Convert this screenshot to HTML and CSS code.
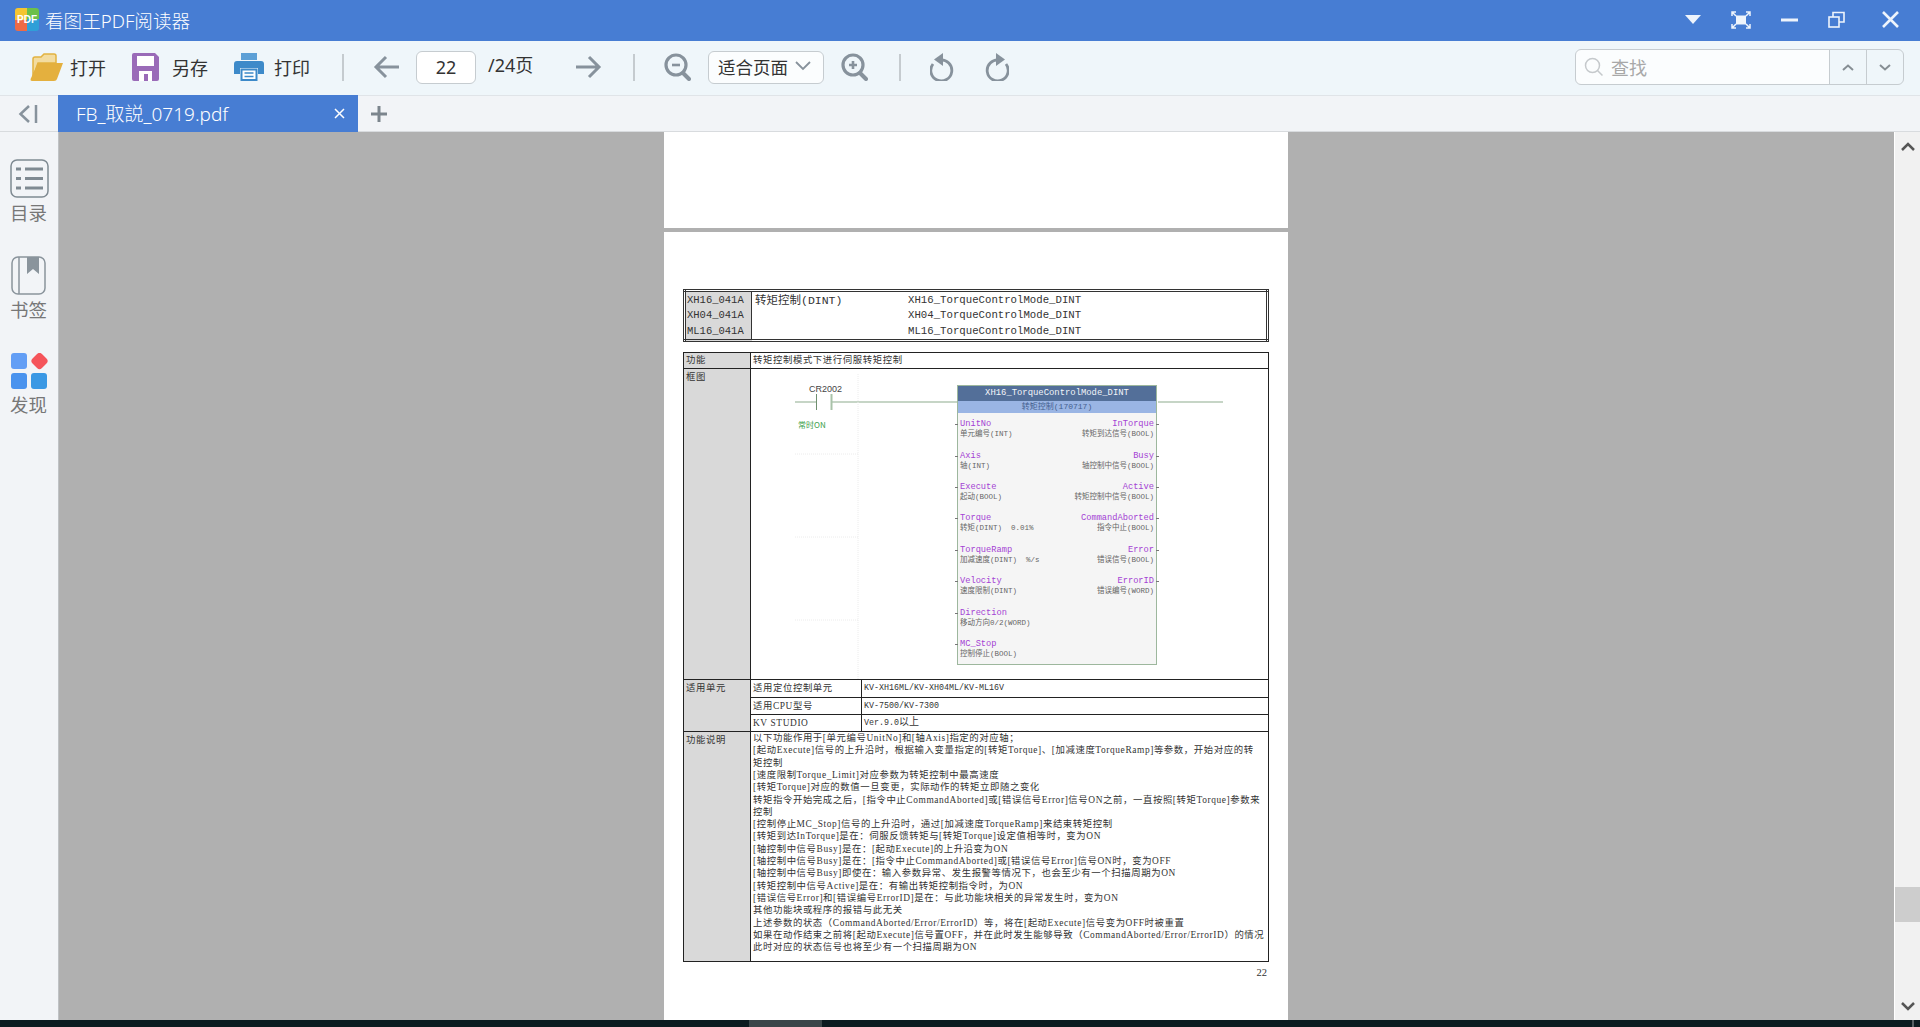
FILE: index.html
```html
<!DOCTYPE html>
<html lang="zh-CN">
<head>
  <meta charset="UTF-8">
  <title>看图王PDF阅读器</title>
  <link rel="stylesheet" href="styles.css">
</head>
<body>
  <header class="titlebar">
    <div class="app-logo">PDF</div>
    <div class="app-name">看图王PDF阅读器</div>
    <div class="win-btns">
      <svg width="16" height="10" viewBox="0 0 16 10"><path d="M0 0H16L8 9Z" fill="#eef4fc"/></svg>
      <svg width="20" height="18" viewBox="0 0 20 18" fill="none" stroke="#eef4fc" stroke-width="1.5"><rect x="5" y="4.5" width="10" height="9" fill="#eef4fc" stroke="none"/><path d="M1 5V1H5M15 1H19V5M19 13V17H15M5 17H1V13M1 1L5 5M19 1L15 5M19 17L15 13M1 17L5 13"/></svg>
      <svg width="17" height="4" viewBox="0 0 17 4"><rect y="0.5" width="17" height="3" fill="#eef4fc"/></svg>
      <svg width="17" height="17" viewBox="0 0 17 17" fill="none" stroke="#eef4fc" stroke-width="1.6"><rect x="1" y="6" width="10" height="10"/><path d="M5 6V1.5H16V11H11"/></svg>
      <svg class="win-close" width="17" height="17" viewBox="0 0 17 17" fill="none" stroke="#eef4fc" stroke-width="2.6"><path d="M1 1L16 16M16 1L1 16"/></svg>
    </div>
  </header>

  <div class="toolbar">
    <div class="tool">
      <svg width="33" height="28" viewBox="0 0 33 28"><path d="M3 24V6Q3 4 5 4H11L14 1H24Q26 1 26 3V10H8Z" fill="#f3dca0" stroke="#e2b240" stroke-width="1.5"/><path d="M8 10H33L27 26Q26.500 28 24 28H2Q0 28 0.600 26Z" fill="#e4b03e"/></svg>
      <span>打开</span>
    </div>
    <div class="tool">
      <svg width="27" height="28" viewBox="0 0 27 28"><path d="M2 0H23L27 4V26Q27 28 25 28H2Q0 28 0 26V2Q0 0 2 0Z" fill="#9a6bb8"/><rect x="5" y="3" width="17" height="10" fill="#fff"/><path d="M7 28V18H20V28H16V21H12V28Z" fill="#fff"/></svg>
      <span>另存</span>
    </div>
    <div class="tool">
      <svg width="30" height="28" viewBox="0 0 30 28"><path d="M7 0H23V7H7Z" fill="#5da0d6"/><path d="M3 8H27Q30 8 30 11V21H24V15H6V21H0V11Q0 8 3 8Z" fill="#3d8ac9"/><rect x="7.500" y="16.500" width="15" height="10.500" fill="#fff" stroke="#3d8ac9" stroke-width="2"/><path d="M10.500 20H19.500M10.500 23.500H19.500" stroke="#3d8ac9" stroke-width="1.500"/></svg>
      <span>打印</span>
    </div>
    <div class="sep"></div>
    <svg class="icon-nav" width="26" height="24" viewBox="0 0 26 24" fill="none" stroke="#87929c" stroke-width="3"><path d="M26 12H3M13 2L3 12L13 22"/></svg>
    <div class="page-input">22</div>
    <div class="page-total">/24页</div>
    <svg class="icon-next" width="26" height="24" viewBox="0 0 26 24" fill="none" stroke="#87929c" stroke-width="3"><path d="M0 12H23M13 2L23 12L13 22"/></svg>
    <div class="sep"></div>
    <svg width="27" height="28" viewBox="0 0 27 28" fill="none" stroke="#87929c"><circle cx="12" cy="12" r="10" stroke-width="3.200"/><path d="M8 12H16" stroke-width="2.600"/><path d="M19 20L25 26" stroke-width="4" stroke-linecap="round"/></svg>
    <div class="zoom-select">适合页面<svg width="16" height="10" viewBox="0 0 16 10" fill="none" stroke="#87929c" stroke-width="1.800"><path d="M1 1L8 8L15 1"/></svg></div>
    <svg width="27" height="28" viewBox="0 0 27 28" fill="none" stroke="#87929c"><circle cx="12" cy="12" r="10" stroke-width="3.200"/><path d="M8 12H16M12 8V16" stroke-width="2.600"/><path d="M19 20L25 26" stroke-width="4" stroke-linecap="round"/></svg>
    <div class="sep"></div>
    <svg width="25" height="28" viewBox="0 0 25 28" fill="none" stroke="#87929c" stroke-width="2.800"><path d="M10 7A10.500 10.500 0 1 1 3 11"/><path d="M13 0V13L4 6.500Z" fill="#87929c" stroke="none"/></svg>
    <svg class="icon-redo" width="25" height="28" viewBox="0 0 25 28" fill="none" stroke="#87929c" stroke-width="2.800"><path d="M15 7A10.500 10.500 0 1 0 22 11"/><path d="M12 0V13L21 6.500Z" fill="#87929c" stroke="none"/></svg>

    <div class="search">
      <svg width="20" height="20" viewBox="0 0 20 20" fill="none" stroke="#c5c9cc" stroke-width="1.500"><circle cx="8.500" cy="8.500" r="7"/><path d="M13.500 13.500L18.500 18.500"/></svg>
      <span class="search-text">查找</span>
      <div class="search-btn"><svg width="12" height="7" viewBox="0 0 12 7" fill="none" stroke="#868e94" stroke-width="2"><path d="M1 6L6 1.500L11 6"/></svg></div>
      <div class="search-btn"><svg width="12" height="7" viewBox="0 0 12 7" fill="none" stroke="#868e94" stroke-width="2"><path d="M1 1L6 5.500L11 1"/></svg></div>
    </div>
  </div>

  <div class="tabbar">
    <div class="tab-toggle">
      <svg width="20" height="20" viewBox="0 0 20 20" fill="none" stroke="#87929c" stroke-width="2.500"><path d="M11 2L2.500 10L11 18"/><path d="M18 1V19"/></svg>
    </div>
    <div class="tab">
      <span class="tab-name">FB_取説_0719.pdf</span>
      <svg width="11" height="11" viewBox="0 0 11 11" fill="none" stroke="#fff" stroke-width="1.500"><path d="M1 1L10 10M10 1L1 10"/></svg>
    </div>
    <svg class="tab-add" width="16" height="16" viewBox="0 0 16 16" fill="none" stroke="#7c858d" stroke-width="3"><path d="M0 8H16M8 0V16"/></svg>
  </div>

  <div class="workspace">
    <aside class="sidebar">
      <div class="side-item">
        <svg width="39" height="39" viewBox="0 0 39 39" fill="none" stroke="#7f8a92"><rect x="1" y="1" width="37" height="37" rx="6" stroke-width="1.500"/><path d="M6 10H11M15 10H33M6 19.500H11M15 19.500H33M6 29H11M15 29H33" stroke-width="3"/></svg>
        <span>目录</span>
      </div>
      <div class="side-item">
        <svg width="35" height="39" viewBox="0 0 35 39" fill="none" stroke="#8a949c" stroke-width="1.500"><rect x="1" y="1" width="33" height="37" rx="6"/><path d="M8 1V38"/><path d="M16 1H28V18L22 13L16 18Z" fill="#8a949c" stroke="none"/></svg>
        <span>书签</span>
      </div>
      <div class="side-item">
        <svg width="37" height="37" viewBox="0 0 37 37"><rect x="0" y="0" width="16" height="16" rx="3" fill="#639ef5"/><path d="M28.500 3.500L33 8L28.500 12.500L24 8Z" fill="#f5545a" stroke="#f5545a" stroke-width="7" stroke-linejoin="round"/><rect x="0" y="20" width="16" height="16" rx="3" fill="#4a93ee"/><rect x="20" y="20" width="16" height="16" rx="3" fill="#3a98e4"/></svg>
        <span>发现</span>
      </div>
    </aside>

    <main class="viewer">
      <div class="page page-prev"></div>
      <div class="page">
        <table class="head-table">
          <tr>
            <td class="cell-id">XH16_041A<br>XH04_041A<br>ML16_041A</td>
            <td>
              <div class="head-row"><span class="head-title">转矩控制(DINT)</span><span>XH16_TorqueControlMode_DINT</span></div>
              <div class="head-row"><span class="head-title"></span><span>XH04_TorqueControlMode_DINT</span></div>
              <div class="head-row"><span class="head-title"></span><span>ML16_TorqueControlMode_DINT</span></div>
            </td>
          </tr>
        </table>

        <table class="spec-table">
          <colgroup>
            <col class="col-name">
            <col class="col-label">
            <col>
          </colgroup>
          <tr class="row-func">
            <th>功能</th>
            <td colspan="2">转矩控制模式下进行伺服转矩控制</td>
          </tr>
          <tr class="row-diagram">
            <th>框图</th>
            <td colspan="2" class="diagram">
              <!-- ladder wires -->
              <svg class="wires" width="519" height="311" viewBox="0 0 519 311" fill="none">
                <path d="M45 34H66M81 34H208M408 34H473" stroke="#8dab8d" stroke-width="1.200"/>
                <path d="M66.500 26V42" stroke="#6f8f6f" stroke-width="1"/>
                <path d="M81.500 26V42" stroke="#a9c2a9" stroke-width="2"/>
                <path d="M108 6V311M45 86H108M45 169H108M45 252H108" stroke="#ececec" stroke-width="1" stroke-dasharray="1 1"/>
              </svg>
              <div class="contact-name">CR2002</div>
              <div class="contact-note">常时ON</div>

              <div class="fb">
                <div class="fb-title">XH16_TorqueControlMode_DINT</div>
                <div class="fb-sub">转矩控制(170717)</div>
                <div class="fb-pins">
                  <div class="pin"><b>UnitNo</b>单元编号(INT)</div>
                  <div class="pin pin-out"><b>InTorque</b>转矩到达信号(BOOL)</div>
                  <div class="pin"><b>Axis</b>轴(INT)</div>
                  <div class="pin pin-out"><b>Busy</b>轴控制中信号(BOOL)</div>
                  <div class="pin"><b>Execute</b>起动(BOOL)</div>
                  <div class="pin pin-out"><b>Active</b>转矩控制中信号(BOOL)</div>
                  <div class="pin"><b>Torque</b>转矩(DINT)&nbsp;&nbsp;0.01%</div>
                  <div class="pin pin-out"><b>CommandAborted</b>指令中止(BOOL)</div>
                  <div class="pin"><b>TorqueRamp</b>加减速度(DINT)&nbsp;&nbsp;%/s</div>
                  <div class="pin pin-out"><b>Error</b>错误信号(BOOL)</div>
                  <div class="pin"><b>Velocity</b>速度限制(DINT)</div>
                  <div class="pin pin-out"><b>ErrorID</b>错误编号(WORD)</div>
                  <div class="pin"><b>Direction</b>移动方向0/2(WORD)</div>
                  <div class="pin-empty"></div>
                  <div class="pin"><b>MC_Stop</b>控制停止(BOOL)</div>
                  <div class="pin-empty"></div>
                </div>
              </div>
            </td>
          </tr>
          <tr class="row-unit">
            <th rowspan="3">适用单元</th>
            <td>适用定位控制单元</td>
            <td class="cell-small">KV-XH16ML/KV-XH04ML/KV-ML16V</td>
          </tr>
          <tr class="row-unit">
            <td>适用CPU型号</td>
            <td class="cell-small">KV-7500/KV-7300</td>
          </tr>
          <tr class="row-unit">
            <td>KV STUDIO</td>
            <td class="cell-small">Ver.9.0<span class="cjk">以上</span></td>
          </tr>
          <tr class="row-desc">
            <th>功能说明</th>
            <td colspan="2">
              <div>以下功能作用于[单元编号UnitNo]和[轴Axis]指定的对应轴&#xFF1B;</div>
              <div>[起动Execute]信号的上升沿时&#xFF0C;根据输入变量指定的[转矩Torque]、[加减速度TorqueRamp]等参数&#xFF0C;开始对应的转</div>
              <div>矩控制</div>
              <div>[速度限制Torque_Limit]对应参数为转矩控制中最高速度</div>
              <div>[转矩Torque]对应的数值一旦变更&#xFF0C;实际动作的转矩立即随之变化</div>
              <div>转矩指令开始完成之后&#xFF0C;[指令中止CommandAborted]或[错误信号Error]信号ON之前&#xFF0C;一直按照[转矩Torque]参数来</div>
              <div>控制</div>
              <div>[控制停止MC_Stop]信号的上升沿时&#xFF0C;通过[加减速度TorqueRamp]来结束转矩控制</div>
              <div>[转矩到达InTorque]是在&#xFF1A;伺服反馈转矩与[转矩Torque]设定值相等时&#xFF0C;变为ON</div>
              <div>[轴控制中信号Busy]是在&#xFF1A;[起动Execute]的上升沿变为ON</div>
              <div>[轴控制中信号Busy]是在&#xFF1A;[指令中止CommandAborted]或[错误信号Error]信号ON时&#xFF0C;变为OFF</div>
              <div>[轴控制中信号Busy]即使在&#xFF1A;输入参数异常、发生报警等情况下&#xFF0C;也会至少有一个扫描周期为ON</div>
              <div>[转矩控制中信号Active]是在&#xFF1A;有输出转矩控制指令时&#xFF0C;为ON</div>
              <div>[错误信号Error]和[错误编号ErrorID]是在&#xFF1A;与此功能块相关的异常发生时&#xFF0C;变为ON</div>
              <div>其他功能块或程序的报错与此无关</div>
              <div>上述参数的状态&#xFF08;CommandAborted/Error/ErrorID&#xFF09;等&#xFF0C;将在[起动Execute]信号变为OFF时被重置</div>
              <div>如果在动作结束之前将[起动Execute]信号置OFF&#xFF0C;并在此时发生能够导致&#xFF08;CommandAborted/Error/ErrorID&#xFF09;的情况</div>
              <div>此时对应的状态信号也将至少有一个扫描周期为ON</div>
            </td>
          </tr>
        </table>
        <div class="page-num">22</div>
      </div>
    </main>

    <div class="scrollbar">
      <svg width="14" height="9" viewBox="0 0 14 9" fill="none" stroke="#555" stroke-width="2.500"><path d="M1 8L7 2L13 8"/></svg>
      <div class="scroll-track"><div class="scroll-thumb"></div></div>
      <svg width="14" height="9" viewBox="0 0 14 9" fill="none" stroke="#555" stroke-width="2.500"><path d="M1 1L7 7L13 1"/></svg>
    </div>
  </div>

  <div class="taskstrip">
    <div class="task-item"></div>
    <div class="task-edge"></div>
  </div>
</body>
</html>
```

FILE: styles.css
```css
* {
  box-sizing: border-box;
}

html, body {
  height: 100%;
}

body {
  margin: 0;
  display: flex;
  flex-direction: column;
  overflow: hidden;
  font-family: "Noto Sans", "Noto Sans CJK SC", sans-serif;
  color: #333;
  background: #b0b0b0;
}

/* title bar */
.titlebar {
  height: 41px;
  flex: none;
  display: flex;
  align-items: center;
  padding: 0 21px 2px 15px;
  background: #477dd3;
  color: #fff;
}

.app-logo {
  width: 24px;
  height: 23px;
  border-radius: 3px;
  background: conic-gradient(from 0deg, #6cc04a 0 90deg, #2f9fd8 90deg 180deg, #ef6a45 180deg 270deg, #f5c531 270deg 360deg);
  color: #fff;
  font-family: "Liberation Sans", sans-serif;
  font-size: 10px;
  font-weight: bold;
  line-height: 23px;
  text-align: center;
}

.app-name {
  margin-left: 6px;
  font-size: 18.600px;
  font-weight: 300;
}

.win-btns {
  margin-left: auto;
  display: flex;
  align-items: center;
  gap: 30px;
}

.win-btns .win-close {
  margin-left: 7px;
}

/* toolbar */
.toolbar {
  height: 54px;
  flex: none;
  display: flex;
  align-items: center;
  padding: 0 16px 2px 30px;
  background: #eff6fa;
}

.tool {
  display: flex;
  align-items: center;
  gap: 7px;
  margin-right: 26px;
  font-size: 18px;
}

.tool:nth-child(3) {
  margin-right: 1px;
}

.tool:nth-child(2) svg {
  margin-right: 6px;
}

.tool:nth-child(3) svg {
  margin-right: 3px;
}

.sep {
  width: 2px;
  height: 27px;
  margin: 0 29px 0 31px;
  background: #c5cbcf;
}

.page-input {
  width: 60px;
  height: 33px;
  margin-left: 17px;
  border: 1px solid #c6ccd0;
  border-radius: 6px;
  background: #fff;
  font-size: 18px;
  line-height: 30px;
  text-align: center;
}

.page-total {
  margin-left: 12px;
  width: 46px;
  font-size: 18px;
  line-height: 30px;
  margin-top: -4px;
}

.icon-next {
  margin-left: 42px;
}

.zoom-select {
  width: 116px;
  height: 33px;
  margin: 0 17px;
  padding: 0 0 2px 9px;
  display: flex;
  align-items: center;
  gap: 7px;
  border: 1px solid #c6ccd0;
  border-radius: 6px;
  background: #fbfdfe;
  font-size: 17.500px;
}

.icon-redo {
  margin-left: 29px;
}

.search {
  width: 329px;
  height: 36px;
  margin-left: auto;
  display: flex;
  align-items: center;
  padding-left: 8px;
  border: 1px solid #c6ccd0;
  border-radius: 6px;
  background: linear-gradient(90deg, #fbfdfe 0 254px, #eff6fa 254px);
}

.search-text {
  margin-left: 7px;
  margin-right: auto;
  font-size: 18px;
  color: #a8a8a8;
}

.search-btn {
  width: 37px;
  height: 100%;
  display: flex;
  align-items: center;
  justify-content: center;
  border-left: 1px solid #c6ccd0;
}

/* tabs */
.tabbar {
  height: 37px;
  flex: none;
  display: flex;
  align-items: center;
  border-top: 1px solid #e0e4e8;
  border-bottom: 1px solid #d8dbde;
  background: #f2f4f7;
}

.tab-toggle {
  width: 58px;
  display: flex;
  justify-content: center;
  padding-right: 2px;
}

.tab {
  width: 300px;
  height: 37px;
  margin-top: -1px;
  display: flex;
  align-items: center;
  justify-content: space-between;
  padding: 0 13px 0 18px;
  background: #477dd3;
  color: #fff;
}

.tab-name {
  font-size: 19px;
  font-weight: 300;
}

.tab-add {
  margin-left: 13px;
}

/* main area */
.workspace {
  flex: 1;
  min-height: 0;
  display: flex;
}

.sidebar {
  width: 59px;
  flex: none;
  display: flex;
  flex-direction: column;
  align-items: center;
  gap: 32px;
  padding: 27px 1px 0 0;
  border-right: 1px solid #bfc2c5;
  background: #f2f4f7;
}

.side-item {
  display: flex;
  flex-direction: column;
  align-items: center;
  gap: 3px;
  font-size: 18.500px;
  line-height: 23px;
  color: #777;
}

.side-item svg {
  margin-left: 1px;
}

.viewer {
  flex: 1;
  min-width: 0;
  overflow: hidden;
  display: flex;
  flex-direction: column;
  align-items: center;
  gap: 4px;
  padding-right: 1px;
}

.page {
  width: 624px;
  flex: 1;
  padding: 57px 19px 0;
  background: #fff;
  font-family: "Liberation Serif", "Noto Sans CJK SC", serif;
  color: #333;
}

.page-prev {
  height: 96px;
  flex: none;
  padding: 0;
}

/* heading table */
.head-table {
  width: 586px;
  height: 52px;
  border-collapse: collapse;
  border: 3px double #333;
  font-family: "Liberation Mono", "Noto Sans CJK SC", monospace;
  font-size: 10.700px;
  line-height: 15.400px;
}

.head-table td {
  padding: 1px 0 0 3px;
  vertical-align: middle;
}

.head-table .cell-id {
  width: 67px;
  padding-left: 1px;
  border-right: 1px solid #333;
  background: #d9d9d9;
  font-size: 10.500px;
  white-space: nowrap;
}

.head-row {
  display: flex;
}

.head-title {
  width: 153px;
  font-size: 11.500px;
  white-space: nowrap;
}

/* spec table */
.spec-table {
  width: 586px;
  margin-top: 10px;
  border-collapse: collapse;
  table-layout: fixed;
  font-size: 9.400px;
  letter-spacing: .6px;
  line-height: 12.300px;
}

.col-name {
  width: 67px;
}

.col-label {
  width: 111px;
}

.spec-table th,
.spec-table td {
  padding: 0 2px;
  border: 1px solid #222;
  vertical-align: top;
  text-align: left;
  font-weight: normal;
  white-space: nowrap;
}

.spec-table th {
  background: #d9d9d9;
}

.row-func th,
.row-func td {
  height: 16px;
  line-height: 15px;
}

.row-diagram th {
  height: 311px;
  padding-top: 2px;
}

.row-unit td,
.row-unit th {
  height: 17.300px;
  line-height: 16px;
}

.spec-table .cell-small {
  font-family: "Liberation Mono", "Noto Sans CJK SC", monospace;
  font-size: 8.330px;
  letter-spacing: 0;
}

.cjk {
  font-size: 10px;
}

.row-desc th {
  height: 230px;
  line-height: 16px;
}

.page-num {
  margin-top: 5px;
  text-align: right;
  padding-right: 2px;
  font-size: 10.500px;
}

/* function block diagram */
.spec-table .diagram {
  position: relative;
  padding: 16px 0 0 206px;
  letter-spacing: 0;
}

.wires {
  position: absolute;
  top: -1px;
  left: -1px;
}

.contact-name {
  position: absolute;
  top: 14px;
  left: 58px;
  font-family: "Liberation Sans", sans-serif;
  font-size: 9px;
  color: #444;
}

.contact-note {
  position: absolute;
  top: 50px;
  left: 47px;
  font-family: "Noto Sans CJK SC", sans-serif;
  font-size: 8px;
  color: #3aa04a;
}

.fb {
  position: relative;
  width: 200px;
  height: 280px;
  border: 1.500px solid #9db79d;
  background: #f5f5f5;
  font-family: "Liberation Mono", "Noto Sans CJK SC", monospace;
}

.fb-title {
  height: 15px;
  background: #536f99;
  color: #f2f5fa;
  font-size: 8.900px;
  line-height: 15px;
  text-align: center;
}

.fb-sub {
  height: 12px;
  background: #9ab5e4;
  color: #44608f;
  font-size: 8px;
  line-height: 12px;
  text-align: center;
}

.fb-pins {
  display: grid;
  grid-template-columns: 1fr 1fr;
  grid-auto-rows: 31.400px;
  padding-top: 5px;
}

.pin {
  position: relative;
  padding: 0 2px;
  color: #666;
  font-size: 7.500px;
  line-height: 9px;
  white-space: nowrap;
}

.pin b {
  display: block;
  color: #a442d4;
  font-size: 8.700px;
  font-weight: normal;
  line-height: 12px;
}

.pin-out {
  text-align: right;
}

/* pin stub */
.pin::before {
  content: "";
  position: absolute;
  top: 6px;
  left: -3px;
  width: 3px;
  height: 1px;
  background: #777;
}

.pin-out::before {
  left: auto;
  right: -3px;
}

/* scrollbar */
.scrollbar {
  width: 26px;
  flex: none;
  display: flex;
  flex-direction: column;
  align-items: center;
  padding: 10px 0 9px;
  border-left: 1px solid #fff;
  background: #f1f1f1;
}

.scroll-track {
  flex: 1;
  width: 100%;
  display: flex;
  flex-direction: column;
  justify-content: flex-end;
  padding-bottom: 80px;
}

.scroll-thumb {
  height: 35px;
  background: #cdcdcd;
}

.taskstrip {
  height: 7px;
  flex: none;
  display: flex;
  background: #0b1b20;
}

.task-item {
  width: 73px;
  margin-left: 749px;
  background: #3a474a;
}

.task-edge {
  width: 2px;
  margin-left: auto;
  margin-right: 6px;
  background: #555f63;
}
```
